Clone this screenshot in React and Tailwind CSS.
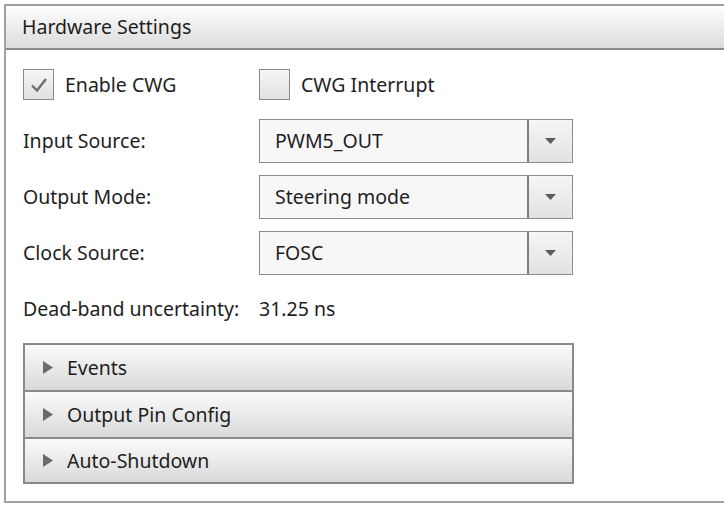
import React from "react";

const font = { fontFamily: '"Noto Sans", "Open Sans", sans-serif' };

function Checkbox({ checked, label }) {
  return (
    <div className="flex items-center">
      <div className="w-[31px] h-[31px] border border-[#8a8a8a] bg-gradient-to-b from-[#f6f6f6] to-[#e0e0e0] flex items-center justify-center">
        {checked && (
          <svg width="20" height="18" viewBox="0 0 20 18">
            <path d="M3 9.5 L8 14.5 L17 3" fill="none" stroke="#6e6e6e" strokeWidth="2.4" />
          </svg>
        )}
      </div>
      <span className="ml-[11px] text-[19.5px] leading-[26px] text-[#1e1e1e]">{label}</span>
    </div>
  );
}

function Combo({ value }) {
  return (
    <div className="flex h-[44px] w-[314px] border border-[#8c8c8c] bg-[#f7f7f7]">
      <div className="flex-1 flex items-center pl-[15px] text-[19.5px] text-[#1e1e1e] border-r-2 border-[#7e7e7e]">
        {value}
      </div>
      <div className="w-[43px] flex items-center justify-center bg-gradient-to-b from-[#f6f6f6] to-[#e2e2e2]">
        <svg width="11" height="6" viewBox="0 0 11 6">
          <path d="M0 0 L11 0 L5.5 6 Z" fill="#5c5c5c" />
        </svg>
      </div>
    </div>
  );
}

function Row({ label, value }) {
  return (
    <div className="flex items-center">
      <div className="w-[236px] text-[19.5px] text-[#1e1e1e]">{label}</div>
      <Combo value={value} />
    </div>
  );
}

function AccItem({ label, last }) {
  return (
    <div
      className={
        "h-[47px] flex items-center pl-[18px] bg-gradient-to-b from-[#fbfbfb] to-[#d9d9d9] border-x-2 border-t-2 border-[#8a8a8a] " +
        (last ? "border-b-2" : "")
      }
    >
      <svg width="10" height="13" viewBox="0 0 10 13">
        <path d="M0 0 L10 6.5 L0 13 Z" fill="#6a6a6a" />
      </svg>
      <span className="ml-[14px] text-[19.5px] text-[#1e1e1e]">{label}</span>
    </div>
  );
}

export default function App() {
  return (
    <div className="w-[724px] h-[511px] bg-white overflow-hidden pt-[4px] pl-[4px]" style={font}>
      <div className="w-[740px] h-[499px] border-l-2 border-b-2 border-t-2 border-[#a0a0a0] flex flex-col">
        <div className="h-[44px] flex items-center pl-[16px] bg-gradient-to-b from-[#fefefe] to-[#dcdcdc] border-b-2 border-[#8a8a8a] text-[19.5px] text-[#1e1e1e]">
          Hardware Settings
        </div>
        <div className="pl-[17px] flex flex-col">
          <div className="flex items-center mt-[19px]">
            <div className="w-[236px]">
              <Checkbox checked label="Enable CWG" />
            </div>
            <Checkbox label="CWG Interrupt" />
          </div>
          <div className="mt-[19px] flex flex-col gap-[12px]">
            <Row label="Input Source:" value="PWM5_OUT" />
            <Row label="Output Mode:" value="Steering mode" />
            <Row label="Clock Source:" value="FOSC" />
          </div>
          <div className="mt-[21px] h-[26px] text-[19.5px] leading-[26px] text-[#1e1e1e] flex">
            <span className="w-[236px]">Dead-band uncertainty:</span>
            <span>31.25 ns</span>
          </div>
          <div className="mt-[21px] w-[551px] flex flex-col">
            <AccItem label="Events" />
            <AccItem label="Output Pin Config" />
            <AccItem label="Auto-Shutdown" last />
          </div>
        </div>
      </div>
    </div>
  );
}
